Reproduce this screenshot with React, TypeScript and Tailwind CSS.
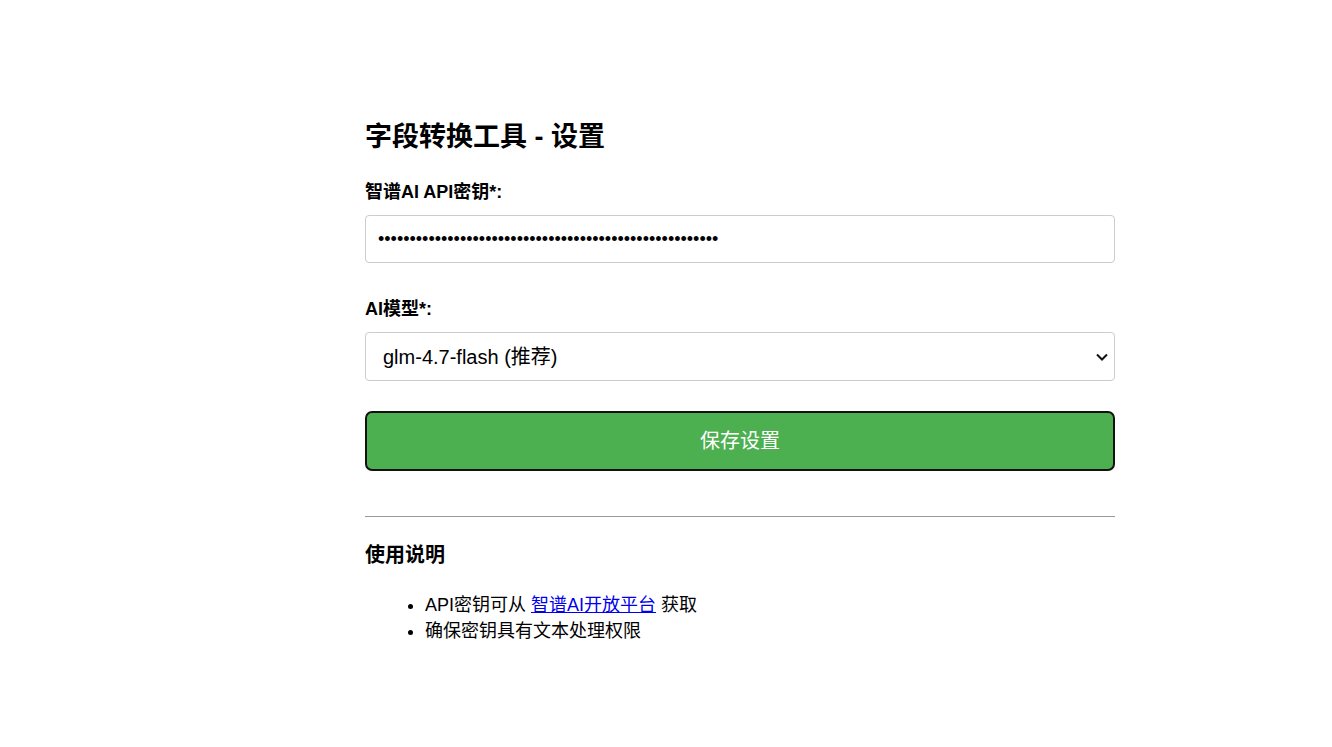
const font = { fontFamily: '"Liberation Sans", "Noto Sans CJK SC", sans-serif' };

export default function App() {
  return (
    <div className="min-h-screen bg-white text-black" style={font}>
      <div className="ml-[365px] w-[750px] pt-[120px]">
        {/* Title */}
        <h2 className="text-[27px] font-bold leading-[34px] mb-[27px]">字段转换工具 - 设置</h2>

        {/* API key */}
        <div className="mb-[35px]">
          <label className="block text-[18px] font-bold leading-[22px] mb-[12px]">
            智谱AI API密钥*:
          </label>
          <input
            type="password"
            defaultValue="sk-0123456789abcdef0123456789abcdef0123456789abcdef012"
            className="block w-full h-[48px] px-[12px] border border-[#ccc] rounded-[4px] text-[18px] outline-none"
            style={font}
          />
        </div>

        {/* Model */}
        <div className="mb-[30px]">
          <label className="block text-[18px] font-bold leading-[22px] mb-[12px]">AI模型*:</label>
          <div className="relative">
            <select
              defaultValue="glm-4.7-flash"
              className="block w-full h-[49px] pl-[17px] pr-[40px] border border-[#ccc] rounded-[4px] text-[20px] bg-white appearance-none outline-none"
              style={font}
            >
              <option value="glm-4.7-flash">glm-4.7-flash (推荐)</option>
              <option value="glm-4-plus">glm-4-plus</option>
            </select>
            <svg
              className="absolute right-[6px] top-[20px] pointer-events-none"
              width="14"
              height="10"
              viewBox="0 0 14 10"
              fill="none"
            >
              <path d="M2 2.5 L7 7.5 L12 2.5" stroke="#111" strokeWidth="2" />
            </svg>
          </div>
        </div>

        {/* Save */}
        <button
          className="block w-full h-[60px] bg-[#4CAF50] text-white text-[20px] border-2 border-[#111] rounded-[7px]"
          style={font}
        >
          保存设置
        </button>

        <hr className="mt-[45px] border-0 border-t border-[#999]" />

        {/* Usage */}
        <h3 className="mt-[24px] text-[20px] font-bold leading-[28px]">使用说明</h3>
        <ul className="mt-[23px] pl-[60px] list-disc text-[18px] leading-[26px]">
          <li>
            API密钥可从{" "}
            <a href="#" className="text-[#0000ee] underline">
              智谱AI开放平台
            </a>{" "}
            获取
          </li>
          <li>确保密钥具有文本处理权限</li>
        </ul>
      </div>
    </div>
  );
}
